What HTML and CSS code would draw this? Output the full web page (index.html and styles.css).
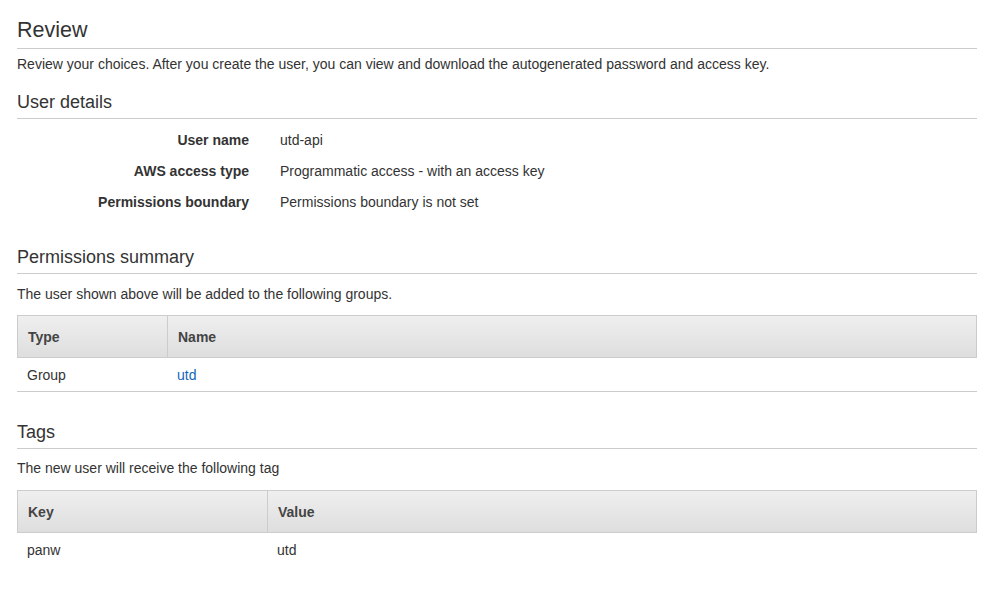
FILE: index.html
```html
<!DOCTYPE html>
<html>
<head>
<meta charset="utf-8">
<link rel="stylesheet" href="styles.css">
</head>
<body>
<div class="page">
  <h1 class="title">Review</h1>
  <p class="desc">Review your choices. After you create the user, you can view and download the autogenerated password and access key.</p>

  <h2 class="section">User details</h2>
  <div class="details">
    <div class="label">User name</div><div class="value">utd-api</div>
    <div class="label">AWS access type</div><div class="value">Programmatic access - with an access key</div>
    <div class="label">Permissions boundary</div><div class="value">Permissions boundary is not set</div>
  </div>

  <h2 class="section perms">Permissions summary</h2>
  <p class="desc sub">The user shown above will be added to the following groups.</p>
  <table class="grid groups">
    <thead><tr><th class="c1">Type</th><th class="c2">Name</th></tr></thead>
    <tbody><tr><td>Group</td><td><a class="link" href="#">utd</a></td></tr></tbody>
  </table>

  <h2 class="section tags">Tags</h2>
  <p class="desc sub2">The new user will receive the following tag</p>
  <table class="grid tagtable">
    <thead><tr><th class="c1">Key</th><th class="c2">Value</th></tr></thead>
    <tbody><tr><td>panw</td><td>utd</td></tr></tbody>
  </table>
</div>
</body>
</html>
```

FILE: styles.css
```css
html, body {
  margin: 0;
  padding: 0;
  background: #fff;
}
body {
  font-family: "Liberation Sans", Arial, Helvetica, sans-serif;
  color: #333;
  font-size: 14px;
}
.page {
  width: 960px;
  padding: 16px 0 0 17px;
}
.title {
  margin: 0;
  font-size: 21.5px;
  font-weight: normal;
  line-height: 28px;
  padding-bottom: 4px;
  border-bottom: 1px solid #ccc;
  color: #333;
}
.desc {
  margin: 6px 0 0 0;
  line-height: 18px;
}
.section {
  margin: 17px 0 0 0;
  font-size: 18px;
  font-weight: normal;
  line-height: 24px;
  padding-bottom: 4px;
  border-bottom: 1px solid #ccc;
  color: #333;
}
.details {
  display: grid;
  grid-template-columns: 232px 1fr;
  column-gap: 31px;
  row-gap: 13px;
  margin-top: 12px;
  line-height: 18px;
}
.label {
  text-align: right;
  font-weight: bold;
  color: #333;
}
.section.perms { margin-top: 34px; }
.desc.sub { margin-top: 11px; }
.grid {
  width: 960px;
  border-collapse: separate;
  border-spacing: 0;
  margin-top: 12px;
  table-layout: fixed;
}
.grid th {
  text-align: left;
  font-weight: bold;
  color: #444;
  height: 41px;
  padding: 0 10px;
  background: linear-gradient(#efefef, #dedede);
  border-top: 1px solid #ccc;
  border-bottom: 1px solid #ccc;
}
.grid th.c1 { border-left: 1px solid #ccc; }
.grid th.c2 { border-left: 1px solid #ccc; border-right: 1px solid #ccc; }
.grid td {
  height: 33px;
  padding: 0 10px;
  color: #333;
}
.groups th.c1 { width: 129px; }
.tagtable th.c1 { width: 229px; }
.groups td { border-bottom: 1px solid #ccc; }
.link { color: #1166bb; text-decoration: none; }
.section.tags { margin-top: 28px; }
.desc.sub2 { margin-top: 10px; }
.tagtable { margin-top: 13px; }
```
